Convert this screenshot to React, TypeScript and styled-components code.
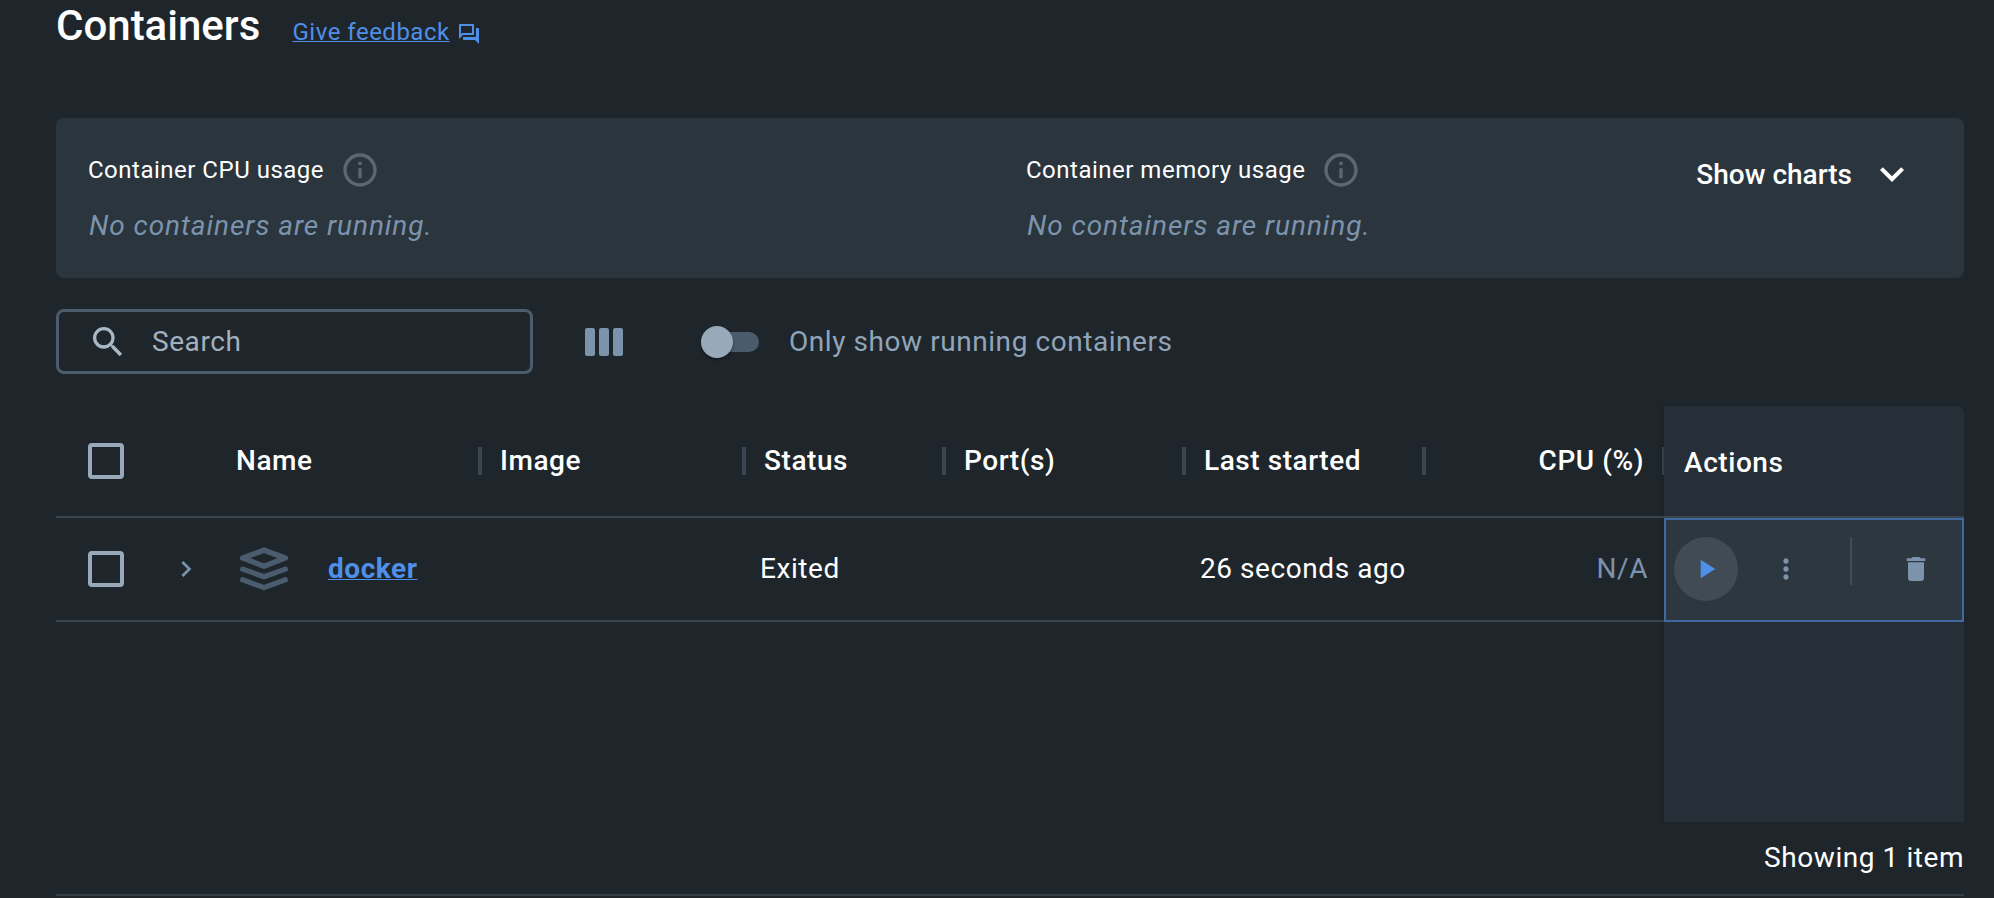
import React from 'react';
import styled, { createGlobalStyle } from 'styled-components';
import {
  MdChevronRight,
  MdDelete,
  MdExpandMore,
  MdInfoOutline,
  MdMoreVert,
  MdOutlineQuestionAnswer,
  MdPlayArrow,
  MdSearch,
} from 'react-icons/md';

const color = {
  page: '#1e262c',
  panel: '#2a353d',
  pinned: '#262f37',
  line: '#394651',
  inputBorder: '#4b5c6d',
  muted: '#7c93ac',
  soft: '#98a9b9',
  faint: '#5d676f',
  blue: '#4f8fe8',
  focus: '#41689f',
  text: '#ffffff',
};

const GlobalStyle = createGlobalStyle`
  *, *::before, *::after { box-sizing: border-box; }
  body {
    margin: 0;
    background: ${color.page};
    color: ${color.text};
    font-family: Roboto, "Liberation Sans", sans-serif;
    font-size: 28px;
    letter-spacing: 0.56px;
    -webkit-font-smoothing: antialiased;
  }
  svg { display: block; flex: none; }
`;

const Page = styled.main`
  display: flex;
  flex-direction: column;
  height: 898px;
  padding: 0 30px 0 56px;
  overflow: hidden;
`;

const Header = styled.header`
  display: flex;
  align-items: baseline;
  height: 118px;
  padding-top: 1px;
`;

const Title = styled.h1`
  margin: 0;
  width: 236.5px;
  font-size: 42px;
  font-weight: 500;
  line-height: 50px;
  letter-spacing: 0;
`;

const FeedbackLink = styled.a`
  display: flex;
  gap: 7px;
  color: ${color.blue};
  font-size: 24px;
  line-height: 32px;
  letter-spacing: 0.5px;

  span {
    text-decoration: underline;
    text-decoration-thickness: 1px;
    text-underline-offset: 1px;
    text-decoration-skip-ink: none;
  }

  svg { margin-top: 6px; }
`;

const UsagePanel = styled.section`
  display: grid;
  grid-template-columns: 938px 1fr auto;
  align-items: start;
  height: 160px;
  padding: 32px 48px 0 32px;
  border-radius: 8px;
  background: ${color.panel};
`;

const UsageTitle = styled.div`
  display: flex;
  align-items: center;
  gap: 16px;
  height: 40px;
  font-size: 24px;
  letter-spacing: 0.5px;

  svg { color: ${color.faint}; }
`;

const UsageEmpty = styled.p`
  margin: 16px 0 0 1px;
  color: ${color.muted};
  font-style: italic;
  line-height: 40px;
  letter-spacing: 0.93px;
`;

const ChartsButton = styled.button`
  display: flex;
  align-items: center;
  gap: 16px;
  height: 48px;
  padding: 0;
  border: 0;
  background: none;
  color: inherit;
  font: inherit;
  font-weight: 500;
  letter-spacing: 0;
`;

const Toolbar = styled.div`
  display: flex;
  align-items: center;
  height: 65px;
  margin: 31px 0 32px;
`;

const SearchField = styled.label`
  display: flex;
  align-items: center;
  width: 477px;
  height: 65px;
  padding-left: 29px;
  border: 3px solid ${color.inputBorder};
  border-radius: 8px;
  color: #a9b8c7;

  svg { margin: 0 24px 0 0; }
`;

const SearchInput = styled.input`
  flex: 1;
  min-width: 0;
  padding: 0;
  border: 0;
  outline: 0;
  background: none;
  color: inherit;
  font: inherit;
  letter-spacing: inherit;

  &::placeholder { color: #a3b1bf; opacity: 1; }
`;

const ColumnsButton = styled.button`
  display: flex;
  gap: 4px;
  margin: 0 78px 0 52px;
  padding: 0;
  border: 0;
  background: none;
`;

const ColumnBar = styled.i`
  width: 10px;
  height: 28px;
  border-radius: 2px;
  background: ${color.muted};
`;

const SwitchTrack = styled.span`
  display: flex;
  align-items: center;
  width: 58px;
  height: 20px;
  margin: 0 30px 0 0;
  border-radius: 10px;
  background: #4a5b6b;
`;

const SwitchThumb = styled.span`
  width: 32px;
  height: 32px;
  flex: none;
  border-radius: 50%;
  background: ${color.soft};
  box-shadow: 0 2px 3px rgba(0, 0, 0, 0.35);
`;

const SwitchLabel = styled.span`
  color: #91a4b8;
`;

const Table = styled.section`
  display: flex;
  height: 416px;
`;

const ScrollArea = styled.div`
  flex: 1;
  min-width: 0;
  overflow: hidden;
`;

const PinnedArea = styled.div`
  width: 300px;
  border-radius: 0 8px 0 0;
  background: ${color.pinned};
  box-shadow: -2px 0 4px rgba(0, 0, 0, 0.14);
`;

const columns = '100px 60px 264px 264px 200px 240px 240px 240px';

const HeadRow = styled.div`
  display: grid;
  grid-template-columns: ${columns};
  align-items: center;
  height: 112px;
  border-bottom: 2px solid ${color.line};
  font-weight: 500;
`;

const Row = styled.div`
  display: grid;
  grid-template-columns: ${columns};
  align-items: center;
  height: 104px;
  border-bottom: 2px solid ${color.line};
`;

const HeadCell = styled.div<{ $end?: boolean }>`
  display: flex;
  align-items: center;
  justify-content: ${p => (p.$end ? 'flex-end' : 'flex-start')};
  padding: 0 18px 0 20px;
  margin-right: -2px;
  line-height: 32px;

  &::after {
    content: '';
    width: 4px;
    height: 28px;
    margin-left: ${p => (p.$end ? '18px' : 'auto')};
    margin-right: -18px;
    background: ${color.line};
  }
`;

const Cell = styled.div<{ $align?: 'center' | 'end'; $muted?: boolean }>`
  display: flex;
  align-items: center;
  justify-content: ${p => p.$align ?? 'flex-start'};
  padding: 0 ${p => (p.$align === 'center' ? 0 : 16)}px;
  color: ${p => (p.$muted ? color.muted : 'inherit')};
  line-height: 32px;
`;

const NameCell = styled(Cell)`
  gap: 40px;
  padding-left: 24px;
`;

const Checkbox = styled.span`
  width: 36px;
  height: 36px;
  border: 4px solid ${color.soft};
  border-radius: 4px;
`;

const GroupLink = styled.a`
  color: ${color.blue};
  font-weight: 700;
  text-decoration: underline;
  text-decoration-thickness: 1px;
  text-underline-offset: 1px;
  text-decoration-skip-ink: none;
`;

const PinnedHead = styled.div`
  display: flex;
  align-items: center;
  height: 112px;
  padding: 2px 20px 0;
  border-bottom: 2px solid ${color.line};
  font-weight: 500;
`;

const ActionsCell = styled.div`
  display: flex;
  align-items: center;
  height: 104px;
  padding: 0 14px 2px 8px;
  border: 2px solid ${color.focus};
  background: #2c373f;
`;

const ActionButton = styled.button<{ $active?: boolean }>`
  display: grid;
  place-items: center;
  width: 64px;
  height: 64px;
  padding: 0;
  border: 0;
  border-radius: 50%;
  background: ${p => (p.$active ? '#414b53' : 'transparent')};
  color: ${p => (p.$active ? color.blue : color.muted)};

  & + & { margin-left: 16px; }
`;

const ActionDivider = styled.span`
  width: 2px;
  height: 48px;
  margin: 0 32px 16px;
  background: #414c55;
`;

const Footer = styled.footer`
  display: flex;
  align-items: center;
  justify-content: flex-end;
  height: 74px;
  padding-bottom: 2px;
  border-bottom: 2px solid #333d46;
`;

const StackIcon = () => (
  <svg width="48" height="44" viewBox="0 0 48 44" fill="none" stroke="#4a5c6d" strokeWidth="5.2" strokeLinecap="round" strokeLinejoin="round">
    <path d="M24 3.1 45.3 11.1 24 19.2 2.7 11.1Z" strokeWidth="5.4" />
    <path d="M2.6 22.1 24 29.7 45.4 22.1" />
    <path d="M2.6 32.8 24 40.6 45.4 32.8" />
  </svg>
);

const Usage = ({ title }: { title: string }) => (
  <div>
    <UsageTitle>
      {title}
      <MdInfoOutline size={40} />
    </UsageTitle>
    <UsageEmpty>No containers are running.</UsageEmpty>
  </div>
);

const headings = ['Name', 'Image', 'Status', 'Port(s)', 'Last started'];

export default function App() {
  return (
    <Page>
      <GlobalStyle />
      <Header>
        <Title>Containers</Title>
        <FeedbackLink>
          <span>Give feedback</span>
          <MdOutlineQuestionAnswer size={24} />
        </FeedbackLink>
      </Header>

      <UsagePanel>
        <Usage title="Container CPU usage" />
        <Usage title="Container memory usage" />
        <ChartsButton>
          Show charts
          <MdExpandMore size={48} />
        </ChartsButton>
      </UsagePanel>

      <Toolbar>
        <SearchField>
          <MdSearch size={40} />
          <SearchInput placeholder="Search" />
        </SearchField>
        <ColumnsButton aria-label="Columns">
          <ColumnBar />
          <ColumnBar />
          <ColumnBar />
        </ColumnsButton>
        <SwitchTrack>
          <SwitchThumb />
        </SwitchTrack>
        <SwitchLabel>Only show running containers</SwitchLabel>
      </Toolbar>

      <Table>
        <ScrollArea>
          <HeadRow>
            <Cell $align="center">
              <Checkbox />
            </Cell>
            <span />
            {headings.map(h => (
              <HeadCell key={h}>{h}</HeadCell>
            ))}
            <HeadCell $end>CPU (%)</HeadCell>
          </HeadRow>
          <Row>
            <Cell $align="center">
              <Checkbox />
            </Cell>
            <Cell $align="center" $muted>
              <MdChevronRight size={32} />
            </Cell>
            <NameCell>
              <StackIcon />
              <GroupLink>docker</GroupLink>
            </NameCell>
            <Cell />
            <Cell>Exited</Cell>
            <Cell />
            <Cell>26 seconds ago</Cell>
            <Cell $align="end" $muted>
              N/A
            </Cell>
          </Row>
        </ScrollArea>
        <PinnedArea>
          <PinnedHead>Actions</PinnedHead>
          <ActionsCell>
            <ActionButton $active aria-label="Start">
              <MdPlayArrow size={32} />
            </ActionButton>
            <ActionButton aria-label="More">
              <MdMoreVert size={32} />
            </ActionButton>
            <ActionDivider />
            <ActionButton aria-label="Delete">
              <MdDelete size={32} />
            </ActionButton>
          </ActionsCell>
        </PinnedArea>
      </Table>

      <Footer>Showing 1 item</Footer>
    </Page>
  );
}
